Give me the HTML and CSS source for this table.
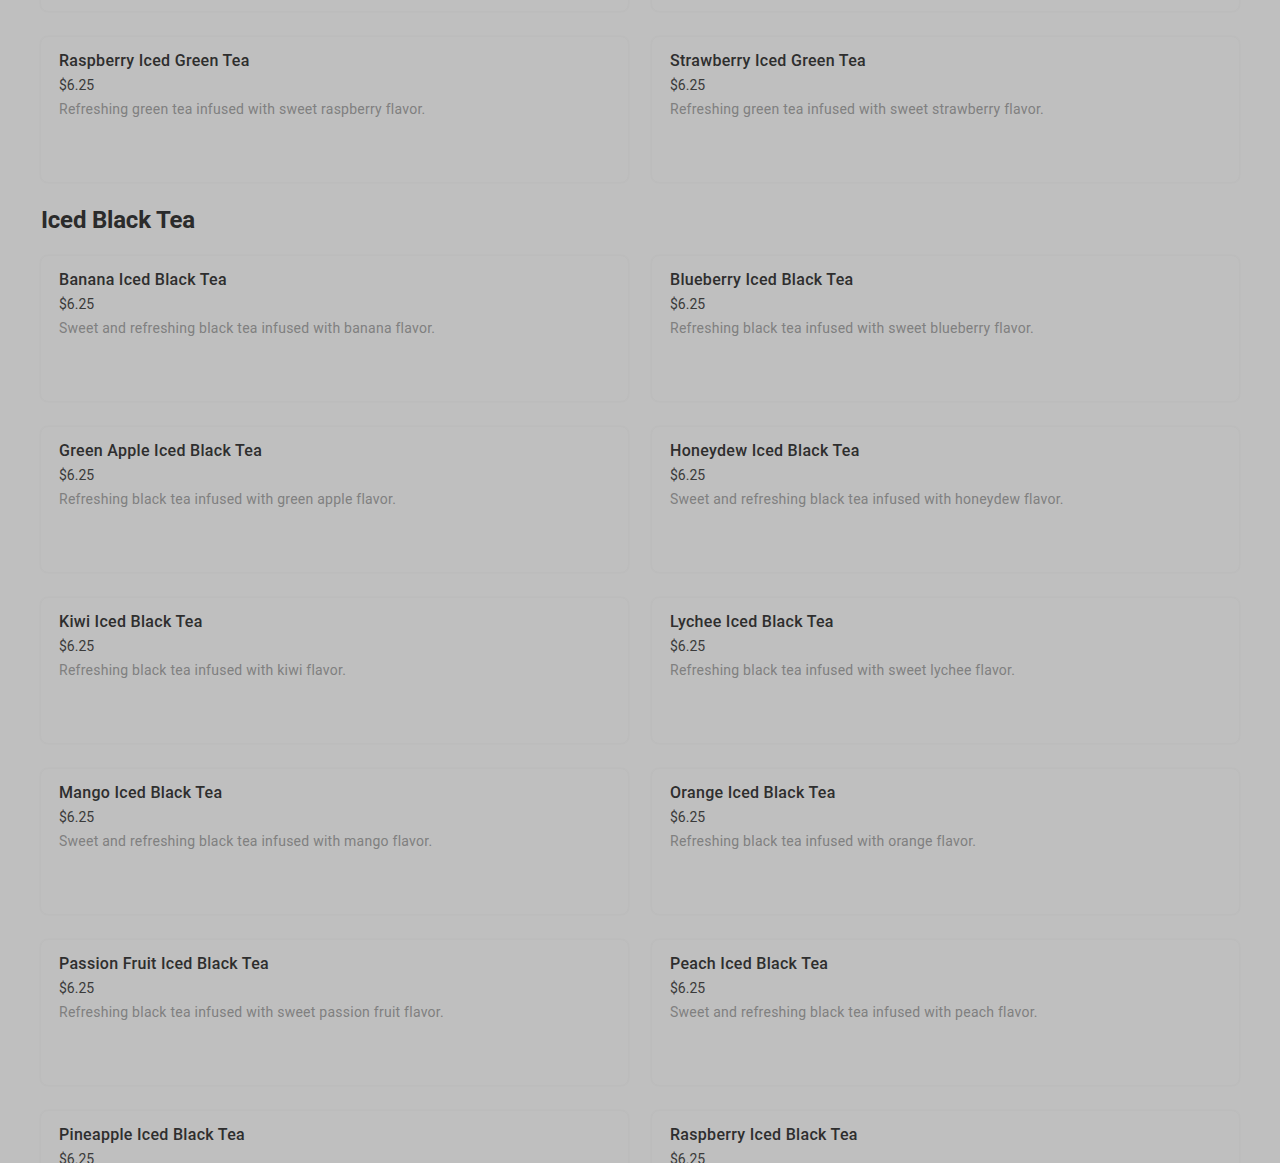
FILE: index.html
```html
<!DOCTYPE html>
<html>
<head>
<meta charset="utf-8">
<link rel="stylesheet" href="styles.css">
</head>
<body>
<main class="menu">
  <div class="grid grid-first">
    <div class="card"><div class="title">Pineapple Iced Green Tea</div><div class="price">$6.25</div><div class="desc">Refreshing green tea infused with sweet pineapple flavor.</div></div>
    <div class="card"><div class="title">Peach Iced Green Tea</div><div class="price">$6.25</div><div class="desc">Refreshing green tea infused with sweet peach flavor.</div></div>
    <div class="card"><div class="title">Raspberry Iced Green Tea</div><div class="price">$6.25</div><div class="desc">Refreshing green tea infused with sweet raspberry flavor.</div></div>
    <div class="card"><div class="title">Strawberry Iced Green Tea</div><div class="price">$6.25</div><div class="desc">Refreshing green tea infused with sweet strawberry flavor.</div></div>
  </div>
  <h2 class="section-title">Iced Black Tea</h2>
  <div class="grid">
    <div class="card"><div class="title">Banana Iced Black Tea</div><div class="price">$6.25</div><div class="desc">Sweet and refreshing black tea infused with banana flavor.</div></div>
    <div class="card"><div class="title">Blueberry Iced Black Tea</div><div class="price">$6.25</div><div class="desc">Refreshing black tea infused with sweet blueberry flavor.</div></div>
    <div class="card"><div class="title">Green Apple Iced Black Tea</div><div class="price">$6.25</div><div class="desc">Refreshing black tea infused with green apple flavor.</div></div>
    <div class="card"><div class="title">Honeydew Iced Black Tea</div><div class="price">$6.25</div><div class="desc">Sweet and refreshing black tea infused with honeydew flavor.</div></div>
    <div class="card"><div class="title">Kiwi Iced Black Tea</div><div class="price">$6.25</div><div class="desc">Refreshing black tea infused with kiwi flavor.</div></div>
    <div class="card"><div class="title">Lychee Iced Black Tea</div><div class="price">$6.25</div><div class="desc">Refreshing black tea infused with sweet lychee flavor.</div></div>
    <div class="card"><div class="title">Mango Iced Black Tea</div><div class="price">$6.25</div><div class="desc">Sweet and refreshing black tea infused with mango flavor.</div></div>
    <div class="card"><div class="title">Orange Iced Black Tea</div><div class="price">$6.25</div><div class="desc">Refreshing black tea infused with orange flavor.</div></div>
    <div class="card"><div class="title">Passion Fruit Iced Black Tea</div><div class="price">$6.25</div><div class="desc">Refreshing black tea infused with sweet passion fruit flavor.</div></div>
    <div class="card"><div class="title">Peach Iced Black Tea</div><div class="price">$6.25</div><div class="desc">Sweet and refreshing black tea infused with peach flavor.</div></div>
    <div class="card"><div class="title">Pineapple Iced Black Tea</div><div class="price">$6.25</div><div class="desc">Refreshing black tea infused with sweet pineapple flavor.</div></div>
    <div class="card"><div class="title">Raspberry Iced Black Tea</div><div class="price">$6.25</div><div class="desc">Refreshing black tea infused with sweet raspberry flavor.</div></div>
  </div>
</main>
</body>
</html>
```

FILE: styles.css
```css
html, body {
  margin: 0;
  padding: 0;
  background: #bfbfbf;
}
body {
  font-family: Roboto, "Liberation Sans", sans-serif;
  color: #2e2e2e;
  overflow: hidden;
  height: 1163px;
}
.menu {
  padding: 0 40px;
  margin-top: -135px;
}
.grid {
  display: grid;
  grid-template-columns: 1fr 1fr;
  column-gap: 22px;
  row-gap: 24px;
}
.card {
  height: 147px;
  box-sizing: border-box;
  padding: 14px 18px;
  border-radius: 8px;
  border: 1px solid #bcbcbc;
  box-shadow: 0 0 2px rgba(0,0,0,0.03);
}
.title {
  font-size: 16px;
  font-weight: 500;
  line-height: 20px;
  letter-spacing: 0.3px;
  color: #2e2e2e;
}
.price {
  margin-top: 4px;
  font-size: 14px;
  line-height: 20px;
  color: #3a3a3a;
}
.desc {
  margin-top: 4px;
  font-size: 14px;
  line-height: 20px;
  letter-spacing: 0.25px;
  color: #808080;
}
.section-title {
  margin: 21px 0 19px 1px;
  font-size: 24px;
  line-height: 32px;
  font-weight: 700;
  color: #2b2b2b;
  letter-spacing: -0.2px;
}
```
